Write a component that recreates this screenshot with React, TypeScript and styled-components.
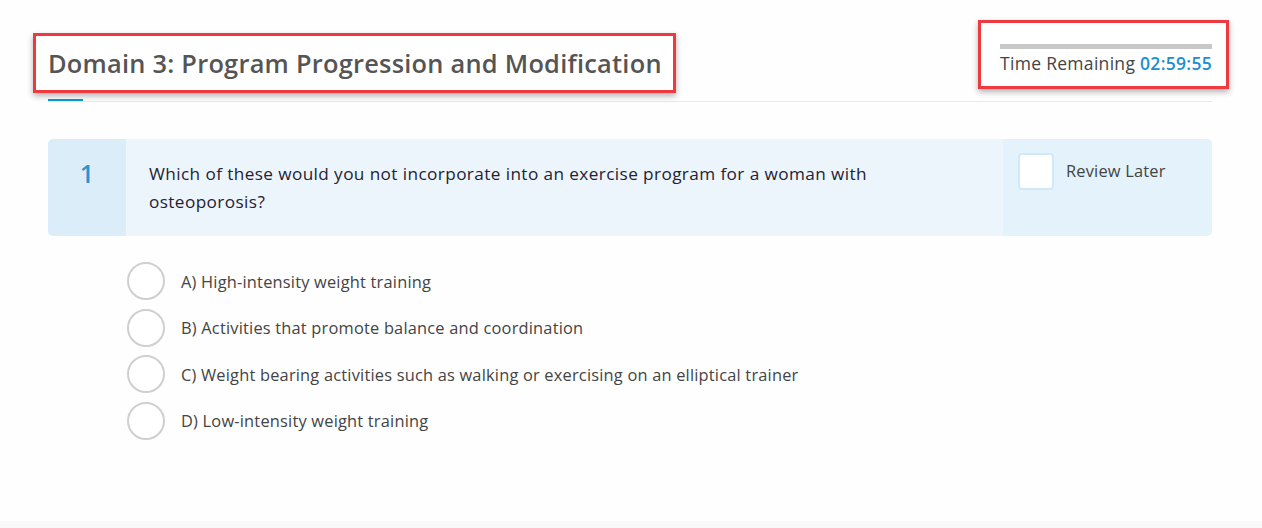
import styled, { createGlobalStyle } from "styled-components";

const GlobalStyle = createGlobalStyle`
  html, body {
    margin: 0;
    padding: 0;
    background: #fefefe;
  }
  body {
    font-family: "Open Sans", "Liberation Sans", sans-serif;
    color: #444;
  }
`;

const Page = styled.div`
  min-height: 100vh;
  display: flex;
  flex-direction: column;
  box-sizing: border-box;
`;

const Main = styled.main`
  flex: 1;
  padding: 0 50px 0 48px;
`;

const Header = styled.header`
  display: flex;
  justify-content: space-between;
  align-items: flex-start;
  margin: 0 -17px 0 -15px;
`;

const Callout = styled.div`
  border: 3px solid #f0393f;
  box-shadow: 0 3px 6px rgba(0, 0, 0, 0.3);
  background: #fff;
  box-sizing: border-box;
`;

const TitleBox = styled(Callout)`
  margin-top: 33px;
  height: 60px;
  display: flex;
  align-items: center;
  padding: 0 11px 0 12px;
`;

const Title = styled.h1`
  margin: 0;
  font-size: 25.4px;
  font-weight: 600;
  color: #555;
  letter-spacing: 0.24px;
`;

const TimerBox = styled(Callout)`
  margin-top: 20px;
  width: 251px;
  height: 69px;
  padding: 21px 14px 0 19px;
`;

const TimerBar = styled.div`
  height: 5px;
  background: #c8c8c8;
`;

const TimerText = styled.div`
  margin-top: 2px;
  font-size: 17.5px;
  letter-spacing: 0.3px;
  color: #444;
  white-space: nowrap;
`;

const Clock = styled.span`
  color: #1a8fd3;
  font-weight: 600;
`;

const Tabs = styled.div`
  margin-top: 6px;
  border-bottom: 1px solid #e9e9e9;
  height: 2px;
`;

const ActiveTab = styled.div`
  width: 35px;
  height: 2px;
  background: #0f96d6;
`;

const Card = styled.section`
  margin-top: 37px;
  display: flex;
  height: 97px;
  border-radius: 5px;
  overflow: hidden;
`;

const Num = styled.div`
  width: 78px;
  flex-shrink: 0;
  background: #dbedf8;
  color: #2a93d2;
  font-size: 25px;
  font-weight: 600;
  text-align: center;
  padding-top: 18px;
  box-sizing: border-box;
  line-height: 32px;
`;

const QuestionText = styled.p`
  flex: 1;
  margin: 0;
  background: #edf5fc;
  padding: 21px 100px 0 23px;
  font-size: 17.2px;
  letter-spacing: 0.4px;
  line-height: 28px;
  color: #1e2233;
`;

const ReviewCol = styled.label`
  width: 209px;
  flex-shrink: 0;
  background: #e3f2fb;
  display: flex;
  align-items: flex-start;
  gap: 12px;
  padding: 14px 0 0 15px;
  box-sizing: border-box;
  cursor: pointer;
`;

const Check = styled.span`
  width: 36px;
  height: 37px;
  box-sizing: border-box;
  background: #fff;
  border: 2px solid #d0e8f7;
  border-radius: 4px;
`;

const ReviewLabel = styled.span`
  font-size: 16.4px;
  letter-spacing: 0.2px;
  line-height: 36px;
  color: #444;
`;

const Options = styled.ul`
  list-style: none;
  margin: 26px 0 0 79px;
  padding: 0;
  display: flex;
  flex-direction: column;
  gap: 8.5px;
`;

const Option = styled.li`
  display: flex;
  align-items: center;
  gap: 16px;
  cursor: pointer;
`;

const Radio = styled.span`
  width: 38px;
  height: 38px;
  box-sizing: border-box;
  border: 2px solid #cfcfcf;
  border-radius: 50%;
  background: #fff;
`;

const OptionText = styled.span`
  font-size: 16.4px;
  letter-spacing: 0.2px;
  color: #444;
`;

const Footer = styled.footer`
  height: 7px;
  background: #f8f8f8;
`;

const options = [
  "A) High-intensity weight training",
  "B) Activities that promote balance and coordination",
  "C) Weight bearing activities such as walking or exercising on an elliptical trainer",
  "D) Low-intensity weight training",
];

export default function App() {
  return (
    <Page>
      <GlobalStyle />
      <Main>
        <Header>
          <TitleBox>
            <Title>Domain 3: Program Progression and Modification</Title>
          </TitleBox>
          <TimerBox>
            <TimerBar />
            <TimerText>
              Time Remaining <Clock>02:59:55</Clock>
            </TimerText>
          </TimerBox>
        </Header>
        <Tabs>
          <ActiveTab />
        </Tabs>
        <Card>
          <Num>1</Num>
          <QuestionText>
            Which of these would you not incorporate into an exercise program for a woman with osteoporosis?
          </QuestionText>
          <ReviewCol>
            <Check />
            <ReviewLabel>Review Later</ReviewLabel>
          </ReviewCol>
        </Card>
        <Options>
          {options.map((o) => (
            <Option key={o}>
              <Radio />
              <OptionText>{o}</OptionText>
            </Option>
          ))}
        </Options>
      </Main>
      <Footer />
    </Page>
  );
}
